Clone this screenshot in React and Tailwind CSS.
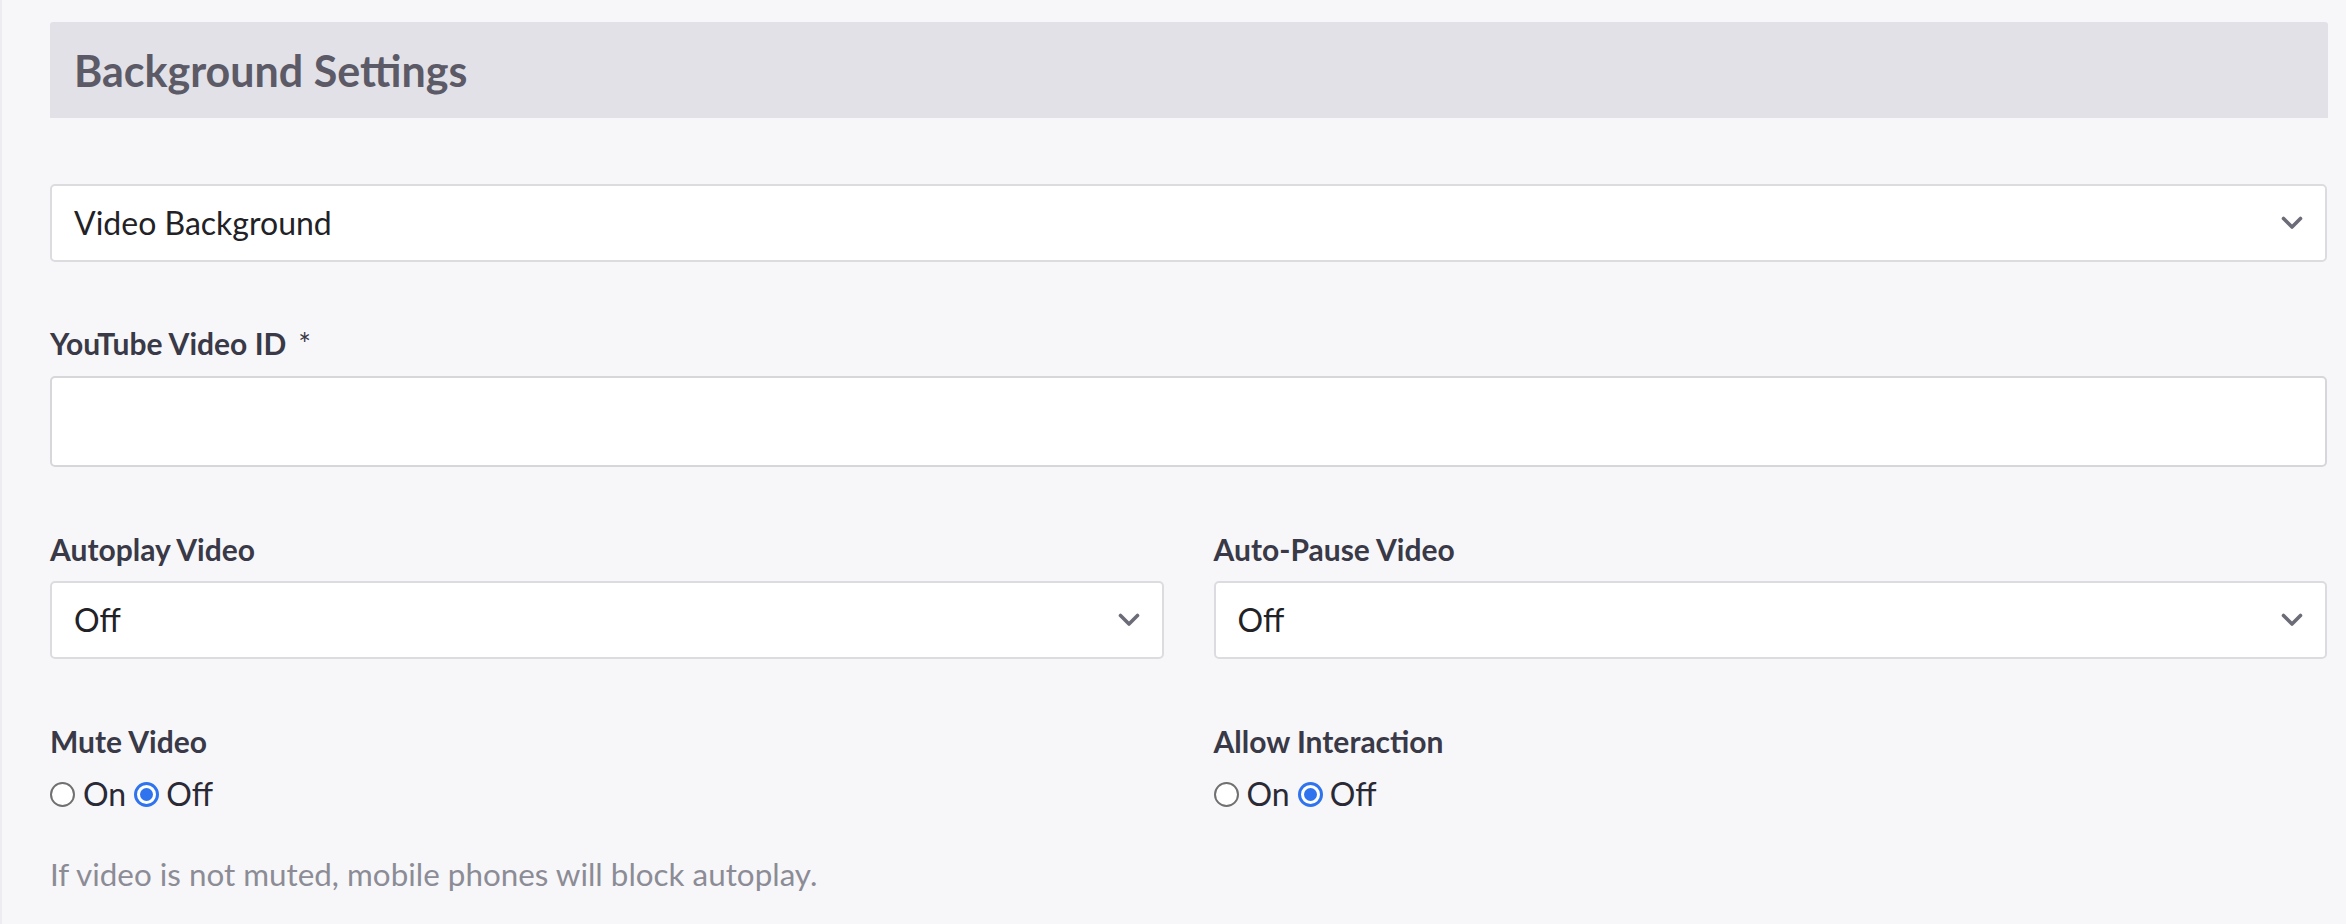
const Chevron = () => (
  <svg width="22" height="14" viewBox="0 0 22 14" fill="none">
    <polyline
      points="2.5,2.5 11,11 19.5,2.5"
      stroke="#6c6c78"
      strokeWidth="3.6"
      strokeLinecap="round"
      strokeLinejoin="round"
    />
  </svg>
);

const SelectBox = ({ value }) => (
  <div className="h-[78px] bg-white border-2 border-[#dcdce0] rounded-[5px] flex items-center justify-between pl-[22px] pr-[22px]">
    <span className="text-[32px] text-[#222226] leading-none">{value}</span>
    <Chevron />
  </div>
);

const Radio = ({ checked }) =>
  checked ? (
    <span className="w-[25px] h-[25px] rounded-full border-[3px] border-[#2f74ee] bg-white flex items-center justify-center">
      <span className="w-[13px] h-[13px] rounded-full bg-[#2f74ee]" />
    </span>
  ) : (
    <span className="w-[25px] h-[25px] rounded-full border-2 border-[#707070] bg-white" />
  );

const RadioGroup = () => (
  <div className="mt-[16px] flex items-center text-[32px] leading-[38px] text-[#2a2a36]">
    <Radio checked={false} />
    <span className="ml-[8px] mr-[8px]">On</span>
    <Radio checked={true} />
    <span className="ml-[7px]">Off</span>
  </div>
);

const Label = ({ children }) => (
  <div className="text-[30px] leading-[36px] font-bold text-[#393947]">{children}</div>
);

export default function App() {
  return (
    <div className="min-h-screen bg-[#f7f7f9] border-l-2 border-[#ededf1] font-['Lato',sans-serif] pt-[22px] pl-[48px] pr-[18px]">
      <div className="h-[96px] bg-[#e2e1e7] rounded-t-[3px] flex items-center pl-[24px]">
        <h2 className="text-[43px] font-bold text-[#5b5a66] leading-none">Background Settings</h2>
      </div>

      <div className="mt-[66px] pr-px">
        <SelectBox value="Video Background" />
      </div>

      <div className="mt-[63px] pr-px">
        <Label>
          YouTube Video ID<span className="ml-[12px] font-normal">*</span>
        </Label>
        <div className="mt-[15px] h-[91px] bg-white border-2 border-[#d6d6db] rounded-[5px]" />
      </div>

      <div className="mt-[64px] grid grid-cols-2 gap-x-[50px] pr-px">
        <div>
          <Label>Autoplay Video</Label>
          <div className="mt-[14px]">
            <SelectBox value="Off" />
          </div>
        </div>
        <div>
          <Label>Auto-Pause Video</Label>
          <div className="mt-[14px]">
            <SelectBox value="Off" />
          </div>
        </div>
        <div className="mt-[64px]">
          <Label>Mute Video</Label>
          <RadioGroup />
        </div>
        <div className="mt-[64px]">
          <Label>Allow Interaction</Label>
          <RadioGroup />
        </div>
      </div>

      <p className="mt-[42px] text-[31.4px] leading-[38px] text-[#8c8c96]">
        If video is not muted, mobile phones will block autoplay.
      </p>
    </div>
  );
}
